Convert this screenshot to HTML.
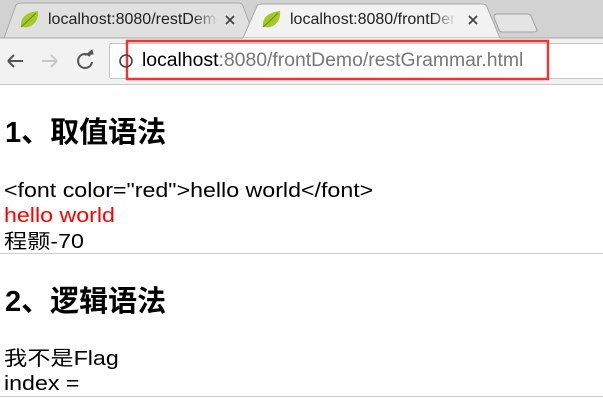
<!DOCTYPE html>
<html><head><meta charset="utf-8"><style>
body{margin:0;width:603px;height:406px;overflow:hidden;background:#fff;font-family:"Liberation Sans","Noto Sans CJK SC",sans-serif;position:relative}
.a{position:absolute;white-space:nowrap}
.t{font-size:20px;line-height:22px;color:#000;transform-origin:0 0;transform:scaleX(1.16)}
h1{margin:0;font-size:29px;line-height:32px;font-weight:bold;position:absolute;left:5px;white-space:nowrap}
.hr{position:absolute;left:0;width:603px;height:1px;background:#ccc}
.tab{position:absolute;top:10px;font-size:16px;line-height:20px;color:#222;overflow:hidden;white-space:nowrap;-webkit-mask-image:linear-gradient(90deg,#000 85%,transparent)}
</style></head><body>
<svg class="a" style="left:0;top:0" width="603" height="86">
<rect width="603" height="38" fill="#d2d2d2"/>
<path d="M4 38 L16 5 Q18 3 22 3 L238 3 Q242 3 243 6 L255 38 Z" fill="#e0e0e0" stroke="#a8a8a8"/>
<path d="M243 38 L257 6 Q258 4 262 4 L482 4 Q486 4 487 7 L500 38 Z" fill="#f2f2f2" stroke="#a8a8a8"/>
<path d="M497 14 L527 14 Q530 14 531 16 L537 30 Q537 32 534 32 L503 32 Q500 32 499 30 L494 17 Q494 14 497 14Z" fill="#e4e4e4" stroke="#a0a0a0"/>
<rect y="38" width="603" height="46" fill="#f2f2f2"/>
<line x1="0" y1="38" x2="243" y2="38" stroke="#a8a8a8"/><line x1="500" y1="38" x2="603" y2="38" stroke="#a8a8a8"/>
<line x1="0" y1="84.5" x2="603" y2="84.5" stroke="#c8c8c8"/>
<rect x="109.5" y="43.5" width="500" height="35" rx="2" fill="#fff" stroke="#c4c4c4"/>
<rect x="127" y="41" width="421" height="38" fill="none" stroke="#ee3333" stroke-width="2.5"/>
<path d="M21 26 Q20 16 32 12 L38 11 Q39 21 31 26 Q25 29 21 26Z" fill="#a8c828"/>
<path d="M21 27 Q28 21 36 13" stroke="#6a9018" fill="none" stroke-width="1.2"/>
<path d="M263 26 Q262 16 274 12 L280 11 Q281 21 273 26 Q267 29 263 26Z" fill="#a8c828"/>
<path d="M263 27 Q270 21 278 13" stroke="#6a9018" fill="none" stroke-width="1.2"/>
<path d="M226 16 l8 8 M234 16 l-8 8 M469 16 l8 8 M477 16 l-8 8" stroke="#444" stroke-width="1.8"/>
<path d="M8 61 H23 M8 61 L14 55 M8 61 L14 67" stroke="#555" stroke-width="2" fill="none"/>
<path d="M42 61 H57 M57 61 L51 55 M57 61 L51 67" stroke="#c8c8c8" stroke-width="2" fill="none"/>
<path d="M90 56 A7 7 0 1 0 92 62" stroke="#555" stroke-width="2" fill="none"/><path d="M86 55 L93 54 L92 50Z" fill="#555" stroke="#555"/>
<circle cx="126" cy="61" r="6" fill="none" stroke="#444" stroke-width="1.6"/>
</svg>
<div class="tab" style="left:48px;width:170px">localhost:8080/restDemo</div>
<div class="tab" style="left:290px;width:166px">localhost:8080/frontDemo</div>
<div class="a" style="left:142px;top:50px;font-size:19px;line-height:22px;color:#777;transform-origin:0 0;transform:scaleX(1.02)"><span style="color:#000">localhost</span>:8080/frontDemo/restGrammar.html</div>
<h1 style="top:117px">1、取值语法</h1>
<div class="a t" style="left:4px;top:180px">&lt;font color="red"&gt;hello world&lt;/font&gt;</div>
<div class="a t" style="left:4px;top:205px;color:#f00">hello world</div>
<div class="a t" style="left:4px;top:231px">程颢-70</div>
<div class="hr" style="top:253px"></div>
<h1 style="top:286px">2、逻辑语法</h1>
<div class="a t" style="left:4px;top:348px">我不是Flag</div>
<div class="a t" style="left:4px;top:373px">index =</div>
<div class="hr" style="top:396px"></div>
</body></html>
